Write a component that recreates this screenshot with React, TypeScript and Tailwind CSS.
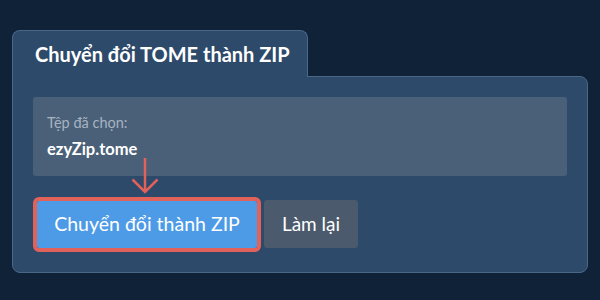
import { useState } from 'react';

export default function App() {
    const [fileName] = useState('ezyZip.tome');

    return (
        <div className="w-[600px] h-[300px] bg-[#0f2237] pt-[30px] px-3 font-['Lato',sans-serif]">
            <div className="relative z-10 inline-flex items-center h-[47px] w-[296px] -mb-px pl-[22px] bg-[#2d4a6a] border border-b-0 border-[#4a6787] rounded-t-lg">
                <h1 className="text-[20px] font-bold text-white">Chuyển đổi TOME thành ZIP</h1>
            </div>
            <div className="h-[197px] bg-[#2d4a6a] border border-[#4a6787] rounded-b-lg rounded-tr-lg px-5 pt-5">
                <div className="h-[79px] bg-[#4a6079] rounded-[3px] px-[14px] pt-[18px]">
                    <div className="text-[14.5px] text-[#a7b3c1] leading-4">Tệp đã chọn:</div>
                    <div className="mt-[8px] text-[16.5px] font-bold text-white leading-5">{fileName}</div>
                </div>
                <div className="relative h-6">
                    <svg className="absolute left-[98px] -top-[18px]" width="28" height="37" viewBox="0 0 28 37" fill="none">
                        <path d="M14 0 V34 M1.5 21.5 L14 34 L26.5 21.5" stroke="#e0625a" strokeWidth="2.5" />
                    </svg>
                </div>
                <div className="flex items-center gap-[7px] pl-[4px]">
                    <button className="h-[47px] w-[220px] bg-[#4d9be6] text-white text-[19.5px] rounded-[2px] outline-4 outline-[#e0625a] outline-offset-0">
                        Chuyển đổi thành ZIP
                    </button>
                    <button className="h-[48px] w-[94px] bg-[#4b5a6c] text-white text-[19px] rounded-[3px]">
                        Làm lại
                    </button>
                </div>
            </div>
        </div>
    );
}
